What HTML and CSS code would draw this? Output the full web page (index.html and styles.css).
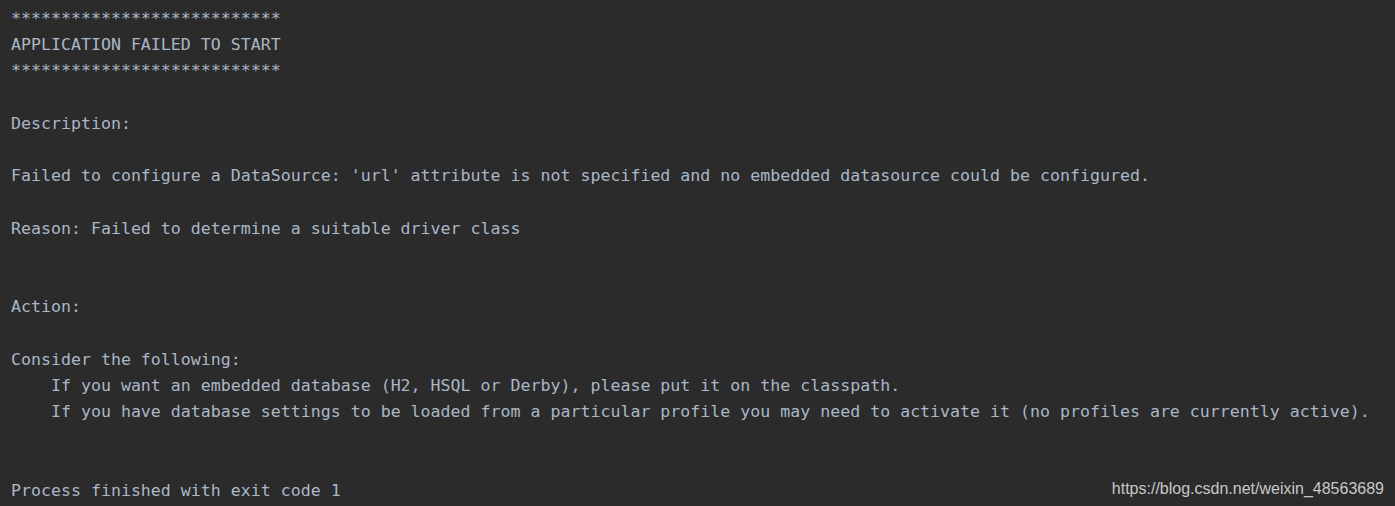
FILE: index.html
```html
<!DOCTYPE html>
<html>
<head>
<meta charset="utf-8">
<link rel="stylesheet" href="styles.css">
</head>
<body>
<div class="console">
<pre class="log">***************************
APPLICATION FAILED TO START
***************************

Description:

Failed to configure a DataSource: 'url' attribute is not specified and no embedded datasource could be configured.

Reason: Failed to determine a suitable driver class


Action:

Consider the following:
    If you want an embedded database (H2, HSQL or Derby), please put it on the classpath.
    If you have database settings to be loaded from a particular profile you may need to activate it (no profiles are currently active).</pre>
<div class="gap"></div>
<div class="last">
<pre class="log">Process finished with exit code 1</pre>
<span class="mark">https://blog.csdn.net/weixin_48563689</span>
</div>
</div>
</body>
</html>
```
FILE: styles.css
```css
html, body {
  margin: 0;
  padding: 0;
  background: #2b2b2b;
  height: 100%;
  overflow: hidden;
}
.console {
  padding: 6px 11px 0 11px;
}
.log {
  margin: 0;
  font-family: "DejaVu Sans Mono", "Liberation Mono", monospace;
  font-size: 16.6px;
  line-height: 26.2px;
  color: #a9b7c6;
  white-space: pre;
}
.gap {
  height: 52.4px;
}
.last {
  display: flex;
  justify-content: space-between;
  align-items: flex-start;
}
.mark {
  font-family: "Liberation Sans", Arial, sans-serif;
  font-size: 16px;
  color: #c8c8c8;
  line-height: 22px;
}
```
